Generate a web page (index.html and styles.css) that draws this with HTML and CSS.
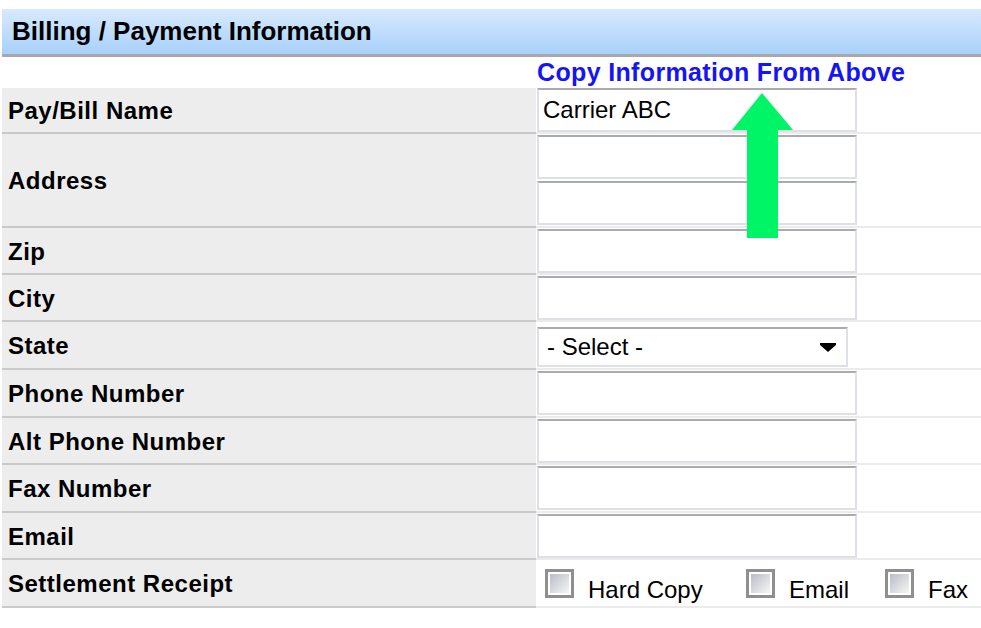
FILE: index.html
```html
<!DOCTYPE html>
<html lang="en">
<head>
    <meta charset="UTF-8">
    <meta name="viewport" content="width=device-width, initial-scale=1.0">
    <link rel="stylesheet" href="styles.css">
    <title>Billing / Payment Information</title>
</head>
<body>

    <div class="section">
        <div class="section-head">Billing / Payment Information</div>

        <div class="copy-row">
            <div></div>
            <a href="#" class="copy-link">Copy Information From Above</a>
        </div>

        <div class="row short">
            <div class="lbl">Pay/Bill Name</div>
            <div class="val"><input type="text" class="txt" value="Carrier ABC"></div>
        </div>
        <div class="row double">
            <div class="lbl">Address</div>
            <div class="val stack">
                <input type="text" class="txt">
                <input type="text" class="txt">
            </div>
        </div>
        <div class="row">
            <div class="lbl">Zip</div>
            <div class="val"><input type="text" class="txt"></div>
        </div>
        <div class="row">
            <div class="lbl">City</div>
            <div class="val"><input type="text" class="txt"></div>
        </div>
        <div class="row tall">
            <div class="lbl">State</div>
            <div class="val">
                <div class="select">
                    <span>- Select -</span>
                    <svg class="caret" width="16" height="9" viewBox="0 0 16 9"><path d="M0 0H16V2L8 9L0 2Z" fill="#000"/></svg>
                </div>
            </div>
        </div>
        <div class="row tall">
            <div class="lbl">Phone Number</div>
            <div class="val"><input type="text" class="txt"></div>
        </div>
        <div class="row">
            <div class="lbl">Alt Phone Number</div>
            <div class="val"><input type="text" class="txt"></div>
        </div>
        <div class="row tall">
            <div class="lbl">Fax Number</div>
            <div class="val"><input type="text" class="txt"></div>
        </div>
        <div class="row">
            <div class="lbl">Email</div>
            <div class="val"><input type="text" class="txt"></div>
        </div>
        <div class="row tall">
            <div class="lbl">Settlement Receipt</div>
            <div class="val checks">
                <label class="opt"><span class="box"></span>Hard Copy</label>
                <label class="opt"><span class="box"></span>Email</label>
                <label class="opt"><span class="box"></span>Fax</label>
            </div>
        </div>

        <svg class="arrow" width="62" height="146" viewBox="0 0 62 146">
            <path d="M30 0L61 37H46V145H15V37H0Z" fill="#00f566"/>
        </svg>
    </div>

</body>
</html>
```

FILE: styles.css
```css
body{margin: 0;padding: 9px 0 0 2px;font-family: "Liberation Sans", Arial, sans-serif;color: #000;background: #fff;overflow: hidden;}
.section{position: relative;width: 979px;}
.section-head{height: 45px;line-height: 45px;padding-left: 10px;font-size: 26px;font-weight: bold;background: linear-gradient(#d8eafe, #a8d0fb);border-bottom: 3px solid #a8a8a8;}

.copy-row{display: grid;grid-template-columns: 535px 1fr;height: 31px;line-height: 31px;}
.copy-link{color: #1414f4;font-size: 25px;font-weight: bold;letter-spacing: 0.35px;text-decoration: none;}

.row{display: grid;grid-template-columns: 534px 1fr;height: 47px;}
.row.short{height: 46px;}
.row.tall{height: 48px;}
.row.double{height: 94px;}
.lbl{display: flex;align-items: center;padding: 2px 0 0 6px;background: #ededed;border-bottom: 2px solid #c9c9c9;font-size: 24px;font-weight: bold;letter-spacing: 0.5px;}
.val{display: flex;align-items: center;padding-left: 1px;border-bottom: 2px solid #ebebeb;}
.val.stack{flex-direction: column;align-items: flex-start;justify-content: center;gap: 2px;}

.txt{box-sizing: border-box;width: 320px;height: 44px;margin: 0;padding: 0 0 0 4px;border: 2px solid #dde0e6;border-top-color: #a9abaf;font-family: "Liberation Sans", Arial, sans-serif;font-size: 24px;color: #000;background: #fff;outline: none;}

.select{box-sizing: border-box;width: 311px;height: 40px;margin-top: 4px;display: flex;align-items: center;justify-content: space-between;padding: 0 10px 0 8px;border: 2px solid #dde0e6;border-top-color: #a9abaf;font-size: 24px;background: #fff;}
.caret{display: block;}

.checks{align-items: flex-start;padding: 9px 0 0 9px;}
.opt{display: flex;align-items: baseline;font-size: 24px;}
.opt:nth-child(1){width: 201px;}
.opt:nth-child(2){width: 139px;}
.box{box-sizing: border-box;width: 29px;height: 29px;margin-right: 14px;border: 3px solid #8f8f8f;background: linear-gradient(135deg, #b3b8c1, #fbfbfb);box-shadow: inset 0 0 0 2px #fff;}

.arrow{position: absolute;left: 730px;top: 84px;}
```
